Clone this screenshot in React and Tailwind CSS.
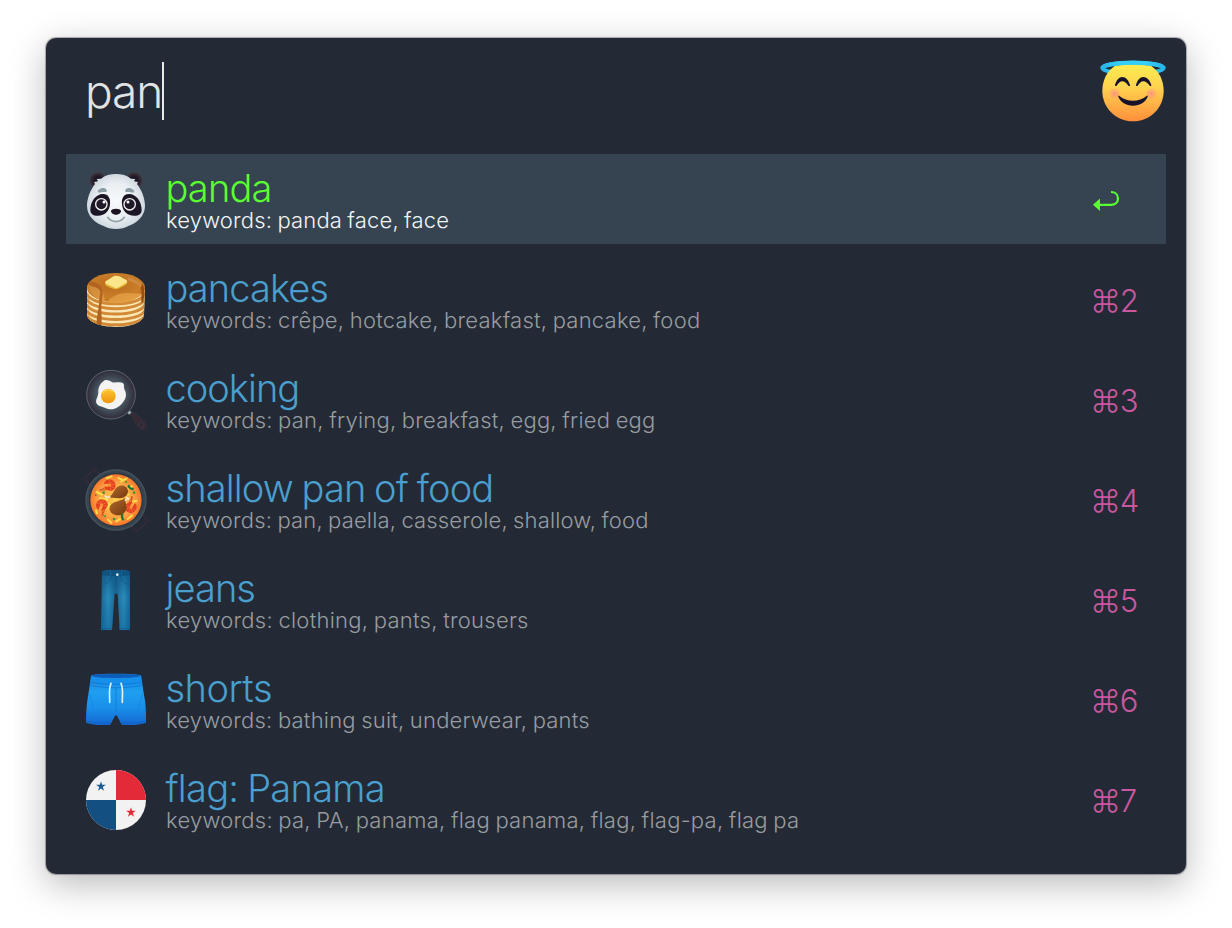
import React from "react";

const icon = "block h-[60px] w-[60px] shrink-0 overflow-visible";

function Angel() {
  return (
    <svg viewBox="60 58 198 189" className="block h-[63px] w-[66px] shrink-0 overflow-visible">
      <defs>
        <linearGradient id="angelFace" x1="0" y1="0" x2="0" y2="1">
          <stop offset="0" stopColor="#fdec50" />
          <stop offset=".4" stopColor="#ffd34f" />
          <stop offset="1" stopColor="#ff8f3c" />
        </linearGradient>
        <radialGradient id="angelCheek">
          <stop offset="0" stopColor="#ff8f86" stopOpacity=".95" />
          <stop offset="1" stopColor="#ff9a80" stopOpacity="0" />
        </radialGradient>
        <linearGradient id="angelHalo" gradientUnits="userSpaceOnUse" x1="60" y1="0" x2="258" y2="0">
          <stop offset="0" stopColor="#27b2e4" />
          <stop offset=".3" stopColor="#33cff8" />
          <stop offset=".7" stopColor="#33cff8" />
          <stop offset="1" stopColor="#27b2e4" />
        </linearGradient>
      </defs>
      <ellipse cx="159" cy="85" rx="92" ry="16" fill="none" stroke="url(#angelHalo)" strokeWidth="12" />
      <path d="M67 154c0-33 14-60 38-76q54-7 108 0c24 16 38 43 38 76 0 51-41 91-92 91s-92-40-92-91z" fill="url(#angelFace)" />
      <path d="M67 85c0-8 38-16 92-16s92 8 92 16" fill="none" stroke="url(#angelHalo)" strokeWidth="13" />
      <circle cx="104" cy="162" r="19" fill="url(#angelCheek)" />
      <circle cx="214" cy="162" r="19" fill="url(#angelCheek)" />
      <path d="M105 136c4-15 12-24 22-24s19 9 23 24c1 4-3 4-5 2-6-8-11-13-18-13s-11 5-17 13c-2 2-6 2-5-2zM168 136c4-15 12-24 22-24s20 9 24 24c1 4-3 4-5 2-6-8-12-13-19-13s-11 5-17 13c-2 2-6 2-5-2z" fill="#17132a" />
      <path d="M117 168c25 20 59 20 84 0 2-1 3 0 2 3-7 16-23 27-44 27s-37-11-44-27c-1-3 0-4 2-3z" fill="#17132a" />
    </svg>
  );
}

function Panda() {
  return (
    <svg viewBox="30 30 180 180" className={icon}>
      <defs>
        <radialGradient id="pandaFace" cx=".5" cy=".5" r=".55">
          <stop offset="0" stopColor="#f8fafc" />
          <stop offset=".6" stopColor="#e9eef2" />
          <stop offset="1" stopColor="#c9d3db" />
        </radialGradient>
        <radialGradient id="pandaEar">
          <stop offset="0" stopColor="#15101f" />
          <stop offset=".55" stopColor="#221b2a" />
          <stop offset="1" stopColor="#453642" />
        </radialGradient>
      </defs>
      <circle cx="66" cy="62" r="25" fill="url(#pandaEar)" />
      <circle cx="174" cy="62" r="25" fill="url(#pandaEar)" />
      <path d="M54 66l12-2-4-7 13-1c12-10 28-14 45-14s33 4 45 14l13 1-4 7 12 2-3 6c14 18 24 43 24 66 0 31-26 52-50 60-9 6-23 9-37 9s-28-3-37-9c-24-8-50-29-50-60 0-23 10-48 24-66z" fill="url(#pandaFace)" />
      <path d="M65 95c3-12 22-15 27-5 2 6-3 7-9 6-7 0-12 3-18 1zM175 95c-3-12-22-15-27-5-2 6 3 7 9 6 7 0 12 3 18 1z" fill="#8c9da3" />
      <g fill="#1c1526">
        <path d="M43 149c0-22 15-47 38-47 17 0 23 15 21 30-1 19-14 35-37 35-14 0-22-6-22-18z" />
        <path d="M197 149c0-22-15-47-38-47-17 0-23 15-21 30 1 19 14 35 37 35 14 0 22-6 22-18z" />
      </g>
      <g fill="#211829" stroke="#f4f2ee" strokeWidth="4">
        <circle cx="76" cy="133" r="17" />
        <circle cx="161" cy="133" r="17" />
      </g>
      <g fill="#fff">
        <circle cx="84" cy="126" r="4.5" />
        <circle cx="156" cy="126" r="4.5" />
      </g>
      <path d="M105 152c2-8 28-8 30 0 1 7-8 12-15 12s-16-5-15-12z" fill="#1b1420" />
      <path d="M95 172c13 17 37 17 50 0" fill="none" stroke="#90a1a5" strokeWidth="5" strokeLinecap="round" />
    </svg>
  );
}

function Pancakes() {
  return (
    <svg viewBox="30 30 180 180" className={icon}>
      <defs>
        <radialGradient id="cakeTop" cx=".45" cy=".4" r=".65">
          <stop offset="0" stopColor="#b96a1c" />
          <stop offset=".7" stopColor="#cb7f29" />
          <stop offset="1" stopColor="#bd6a19" />
        </radialGradient>
        <linearGradient id="cakeLight" x1="0" y1="0" x2="1" y2="1">
          <stop offset="0" stopColor="#cc8838" />
          <stop offset="1" stopColor="#e9a445" />
        </linearGradient>
        <clipPath id="cakeBody">
          <path d="M33 78v85c0 22 38 38 87 38s84-16 84-38l3-75z" />
        </clipPath>
      </defs>
      <g clipPath="url(#cakeBody)">
        <path d="M33 78h174v125H33z" fill="#fde7b4" />
        <g fill="none" stroke="#d08a38" strokeWidth="9">
          <path d="M32 100c12 42 162 42 176 0" />
          <path d="M32 116c12 40 162 40 176 0" />
          <path d="M32 133c12 39 162 39 176 0" />
          <path d="M32 150c12 38 162 38 176 0" />
          <path d="M32 166c14 38 160 38 176 0" />
        </g>
      </g>
      <ellipse cx="120" cy="83" rx="87" ry="44" fill="url(#cakeTop)" />
      <path d="M37 74c3 28 24 46 50 49-2-15-8-25-8-39-9 0-24-7-42-10zM90 127c18-16 36-28 60-28 20 0 38 4 48 0-18 25-57 36-108 28z" fill="url(#cakeLight)" />
      <path d="M156 52c18 5 39 17 46 28-8 4-16-6-25-10-9-6-25-6-21-18z" fill="#cf8b43" />
      <path d="M41 65c15-2 39 11 39 27 0 20-5 38-4 58 1 16 1 31 1 41-1 7-15 4-15-3 0-19 7-45 8-66 1-20 8-29-5-37-9-5-18-7-27-10z" fill="#b0641f" />
      <path d="M199 70c7 16 9 29 4 48-1 9-7 17-7 2 0-16 2-26-2-36z" fill="#9b4d16" />
      <path d="M88 68v7c0 3 25 13 32 13s33-14 33-18v-6z" fill="#e3b638" />
      <path d="M90 63l24-15c4-2 10-1 16 1l21 11c4 3 3 6 0 8l-23 14c-4 3-10 2-15 0L90 71c-4-2-3-6 0-8z" fill="#fbe58a" />
    </svg>
  );
}

function Cooking() {
  return (
    <svg viewBox="30 30 180 180" className={icon}>
      <defs>
        <radialGradient id="fryPan">
          <stop offset="0" stopColor="#72818a" />
          <stop offset=".55" stopColor="#4c5b66" />
          <stop offset=".8" stopColor="#3a404c" />
          <stop offset="1" stopColor="#322b39" />
        </radialGradient>
        <linearGradient id="yolk" x1="0" y1="0" x2="0" y2="1">
          <stop offset="0" stopColor="#fdc534" />
          <stop offset="1" stopColor="#f0940c" />
        </linearGradient>
      </defs>
      <path d="M163 162l8-6c12 10 34 26 38 35 3 8-1 18-9 18-12 0-26-29-37-47z" fill="#352a36" stroke="#3e333e" strokeWidth="2" />
      <path d="M189 189c5-7 14 3 14 9-1 7-14-1-14-9z" fill="#232a34" stroke="#4a3d48" strokeWidth="2" />
      <path d="M153 158l7-7 7 6-7 7z" fill="#9aa7ae" />
      <circle cx="105" cy="104" r="73" fill="url(#fryPan)" stroke="#5b6771" strokeWidth="3" />
      <path d="M82 64c6-7 16-4 24 1 6 4 14 2 24 2 9 0 14 3 14 10-1 6 1 11 4 17 4 11 2 22-6 31-9 12-21 23-39 23-11 0-16-6-25-8-10-2-17-7-18-15 0-10 7-16 7-27-1-14 5-27 15-34z" fill="#f4f4f3" />
      <circle cx="97" cy="108" r="22" fill="url(#yolk)" />
      <path d="M82 98c6-10 23-12 30-2" fill="none" stroke="#ffdc67" strokeWidth="3" strokeLinecap="round" />
    </svg>
  );
}

function Shrimp({ transform }) {
  return (
    <g transform={transform}>
      <path d="M-15-9C-9-20 14-19 17-3c3 15-9 24-22 19-6-3-11-7-10-12 7 3 14 1 13-4-1-6-9-2-15-3z" fill="#e5401f" />
      <path d="M-1-15l2 9M9-12L4-4M16-3L6 0M13 9L5 4M3 16L2 7" stroke="#f4743c" strokeWidth="2" />
      <path d="M-9 13c-8 4-14 0-21 1M-11 9c-9-1-13 4-16 10" stroke="#d34b20" strokeWidth="3" fill="none" />
      <circle r="5" fill="#ff8f36" />
    </g>
  );
}

function Paella() {
  return (
    <svg viewBox="30 30 180 180" className={icon}>
      <defs>
        <radialGradient id="stew">
          <stop offset="0" stopColor="#ffd04f" />
          <stop offset=".7" stopColor="#ffa143" />
          <stop offset="1" stopColor="#f5762b" />
        </radialGradient>
        <linearGradient id="leg" x1="0" y1="0" x2="1" y2="1">
          <stop offset="0" stopColor="#b26a2c" />
          <stop offset="1" stopColor="#74380f" />
        </linearGradient>
      </defs>
      <path d="M50 81L30 61q-4-5 0-10l19-20q5-5 10 0l18 17M163 193l15 17q5 5 10 0l23-23q5-5 0-10l-17-17" fill="none" stroke="#342b37" strokeWidth="5" />
      <circle cx="120" cy="120" r="90" fill="#36444f" stroke="#45535d" strokeWidth="4" />
      <circle cx="120" cy="120" r="81" fill="#2b3541" />
      <circle cx="120" cy="120" r="77" fill="url(#stew)" />
      <g stroke="#ffdd48" strokeWidth="6" strokeLinecap="round">
        <path d="M62 96l15 8M92 55l15-6M135 65l17-10M158 86l10-8M146 99l12 5M170 125l12-3M93 144l11-9M96 179l10 9M121 184l11-7M155 177l13-10M82 137l17-5M127 54l10 4M128 105l14 17M72 115l22 4M60 151l3 9" />
      </g>
      <Shrimp transform="translate(101 75)" />
      <Shrimp transform="translate(77 135) rotate(-65)" />
      <Shrimp transform="translate(165 142) rotate(125)" />
      <g fill="url(#leg)">
        <path d="M103 108c7-3 9-13 15-21 8-12 24-14 33-5 10 11 4 26-10 31-14 5-26-1-37 1z" />
        <path d="M150 120c-4 4 3 16 1 26-3 15-19 24-35 18-16-5-20-20-10-31 11-10 27-9 40-18z" />
      </g>
      <g stroke="#f8e9d1" strokeWidth="5" strokeLinecap="round">
        <path d="M91 111h10M88 108l4 6M148 121l7-7M152 112l6 5" />
      </g>
      <path d="M158 78c2 6 6 9 12 9M139 164c-2 5-1 10 2 14" fill="none" stroke="#207632" strokeWidth="7" strokeLinecap="round" />
      <g fill="#3c9635">
        <circle cx="83" cy="98" r="4" /><circle cx="59" cy="105" r="3" /><circle cx="174" cy="98" r="4" />
        <circle cx="114" cy="177" r="4" /><circle cx="87" cy="169" r="3" /><circle cx="150" cy="66" r="3" />
      </g>
    </svg>
  );
}

function Jeans() {
  return (
    <svg viewBox="30 30 180 180" className={icon}>
      <defs>
        <linearGradient id="denim" x1="0" y1="0" x2="1" y2="0">
          <stop offset="0" stopColor="#176896" />
          <stop offset=".25" stopColor="#2a8cbc" />
          <stop offset=".5" stopColor="#1a6795" />
          <stop offset=".78" stopColor="#2a8cbc" />
          <stop offset="1" stopColor="#176896" />
        </linearGradient>
        <linearGradient id="denimShade" x1="0" y1="0" x2="0" y2="1">
          <stop offset="0" stopColor="#0b4f7d" stopOpacity=".75" />
          <stop offset=".45" stopColor="#0b4f7d" stopOpacity="0" />
          <stop offset="1" stopColor="#0b5a8e" stopOpacity=".4" />
        </linearGradient>
      </defs>
      <path d="M78 34c22-5 62-5 84 0v176h-31l-6-109h-9l-8 109H75z" fill="url(#denim)" />
      <path d="M78 34c22-5 62-5 84 0v176h-31l-6-109h-9l-8 109H75z" fill="url(#denimShade)" />
      <path d="M78 36c22-5 62-5 84 0v10c-24 3-60 3-84 0z" fill="#0e5280" />
      <path d="M77 73c17 0 27-9 29-25M163 73c-17 0-27-9-29-25M120 48v36" fill="none" stroke="#0f5079" strokeWidth="1.5" />
      <path d="M103 34v13M137 34v13" stroke="#1b6798" strokeWidth="3" />
      <path d="M75 206h32M132 206h30" stroke="#0e588a" strokeWidth="2" />
      <circle cx="124" cy="44" r="4" fill="#d4eefa" />
    </svg>
  );
}

function Shorts() {
  return (
    <svg viewBox="30 30 180 180" className={icon}>
      <defs>
        <linearGradient id="swim" x1="0" y1="0" x2="0" y2="1">
          <stop offset="0" stopColor="#1480e2" />
          <stop offset=".35" stopColor="#1e9ff0" />
          <stop offset=".65" stopColor="#1a90ec" />
          <stop offset="1" stopColor="#1368d0" />
        </linearGradient>
      </defs>
      <path d="M46 46c20-6 128-6 149 0 4 20 6 46 12 76 3 22 3 46 3 66-20 7-44 9-73 6l-14-27q-3-3-6 0l-14 27c-29 3-53 1-73-6 0-20 1-44 4-66 5-30 8-56 12-76z" fill="url(#swim)" />
      <ellipse cx="120" cy="48" rx="73" ry="6" fill="#0c5cb8" />
      <path d="M45 49c26 8 124 8 150 0l2 19c-32 10-122 10-154 0z" fill="#168fea" />
      <path d="M43 66c32 10 122 10 154 0M42 75c32 11 124 11 156 0" fill="none" stroke="#0f72d4" strokeWidth="2" />
      <path d="M120 82v74" stroke="#1378d8" strokeWidth="2.5" />
      <path d="M40 101l5 18 9 31M200 101l-5 18-9 31" fill="none" stroke="#1680e0" strokeWidth="2" />
      <path d="M31 183c22 6 46 8 74 5M209 183c-22 6-46 8-74 5" fill="none" stroke="#1059bd" strokeWidth="2" />
      <path d="M105 70c-8 18-3 36-4 57M135 70c8 18 3 36 4 57" fill="none" stroke="#dbf4f8" strokeWidth="5" strokeLinecap="round" />
    </svg>
  );
}

function Panama() {
  return (
    <svg viewBox="30 30 180 180" className={icon}>
      <defs>
        <clipPath id="flagDisc"><circle cx="120" cy="120" r="90" /></clipPath>
      </defs>
      <g clipPath="url(#flagDisc)">
        <path d="M30 30h180v180H30z" fill="#f2f2f2" />
        <path d="M120 30h90v90h-90z" fill="#e32a38" />
        <path d="M30 120h90v90H30z" fill="#134f80" />
      </g>
      <path d="M75 64l3.500 10.500h11l-9 6.500 3.500 11-9-6.500-9 6.500 3.500-11-9-6.500h11z" fill="#1b5d93" />
      <path d="M165 142l3.500 10.500h11l-9 6.500 3.500 11-9-6.500-9 6.500 3.500-11-9-6.500h11z" fill="#e32a38" />
    </svg>
  );
}

const rows = [
  { Icon: Panda, title: "panda", words: "panda face, face", titleFit: "tracking-[-0.8px]", wordsFit: "tracking-[0.16px]" },
  { Icon: Pancakes, title: "pancakes", words: "crêpe, hotcake, breakfast, pancake, food", key: 2, titleFit: "tracking-[-0.9px]", wordsFit: "tracking-[0.23px]" },
  { Icon: Cooking, title: "cooking", words: "pan, frying, breakfast, egg, fried egg", key: 3, titleFit: "tracking-[-0.95px]", wordsFit: "tracking-[0.23px]" },
  { Icon: Paella, title: "shallow pan of food", words: "pan, paella, casserole, shallow, food", key: 4, titleFit: "tracking-[-0.85px]", wordsFit: "tracking-[0.16px]" },
  { Icon: Jeans, title: "jeans", words: "clothing, pants, trousers", key: 5, titleFit: "tracking-[-0.9px]", wordsFit: "tracking-[0.26px]" },
  { Icon: Shorts, title: "shorts", words: "bathing suit, underwear, pants", key: 6, titleFit: "tracking-[-0.45px]", wordsFit: "tracking-[0.21px]" },
  { Icon: Panama, title: "flag: Panama", words: "pa, PA, panama, flag panama, flag, flag-pa, flag pa", key: 7, titleFit: "tracking-[-0.7px]", wordsFit: "tracking-[0.25px]" },
];

function Row({ Icon, title, words, shortcut, titleFit, wordsFit }) {
  const selected = !shortcut;
  return (
    <li className={`flex h-[90px] pl-5 ${selected ? "bg-[#364350]" : ""}`}>
      <div className="pt-4"><Icon /></div>
      <div className="flex-1 pt-[14px] pl-5">
        <div className={`-ml-[0.6px] text-[38px] leading-[40px] font-light whitespace-nowrap [word-spacing:-1.2px] ${titleFit} ${selected ? "text-[#5aff32]" : "text-[#4a9fce]"}`}>{title}</div>
        <div className={`-mt-px text-[22px] leading-[26px] font-light whitespace-nowrap [word-spacing:-1px] ${wordsFit} ${selected ? "text-[#f2f4f5]" : "text-[#989ca1]"}`}>keywords: {words}</div>
      </div>
      <div className="w-[76px] shrink-0 pt-[28px] text-[31px] leading-[38px] font-light tracking-[-1.2px] whitespace-nowrap text-[#c8579e]">
        {selected ? (
          <svg viewBox="0 0 28 22" className="ml-[2px] mt-[8px] block h-[22px] w-[28px]">
            <path d="M19 2c4 0 7 2.500 7 6.500 0 4-3 6.300-7 6.300H6" fill="none" stroke="#5aff32" strokeWidth="2.200" />
            <path d="M1 14.800L8 8.500v12.600z" fill="#5aff32" />
          </svg>
        ) : `⌘${shortcut}`}
      </div>
    </li>
  );
}

export default function App() {
  return (
    <div className="h-[928px] w-[1232px] overflow-hidden bg-white px-[46px] pt-[38px] font-['Inter','Liberation_Sans',sans-serif]">
      <main className="h-[836px] w-[1140px] rounded-[10px] bg-[#232a35] px-5 shadow-[0_0_1px_1px_rgba(0,0,0,0.3),0_10px_36px_rgba(0,0,0,0.28)]">
        <header className="flex h-[116px] justify-between pl-5">
          <div className="flex pt-6">
            <span className="-ml-px text-[46px] leading-[58px] font-light tracking-[-1.1px] text-[#e2e3e4]">pan</span>
            <span className="h-[58px] w-[2px] bg-[#e8e9ea]" />
          </div>
          <div className="pt-[21px]"><Angel /></div>
        </header>
        <ul className="flex flex-col gap-[10px]">
          {rows.map(({ key, ...row }) => <Row key={row.title} shortcut={key} {...row} />)}
        </ul>
      </main>
    </div>
  );
}
